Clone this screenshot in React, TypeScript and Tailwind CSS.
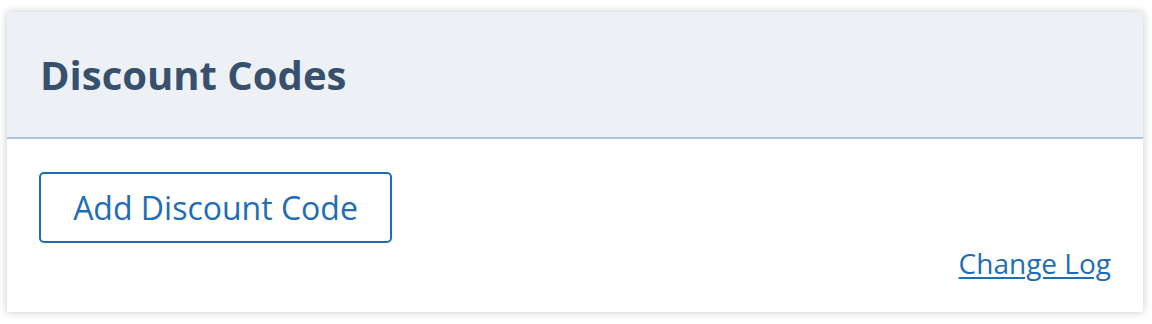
export default function App() {
  return (
    <div className="w-[1152px] h-[324px] bg-white pt-[12px] px-[7px]" style={{ fontFamily: '"Open Sans", sans-serif' }}>
      <div className="w-[1136px] h-[300px] bg-white shadow-[0_0_8px_rgba(0,0,0,0.22)] flex flex-col">
        <div className="h-[125px] bg-[#edf1f6] border-b-2 border-[#b0c3d7] box-content flex items-center pl-[33px]">
          <h1 className="text-[40px] font-bold text-[#36506e] leading-none">Discount Codes</h1>
        </div>
        <div className="flex-1 flex flex-col px-[32px] pt-[33px]">
          <div>
            <button className="h-[71px] w-[353px] border-2 border-[#1f6db4] rounded-[5px] text-[#1f6db4] text-[32px] leading-none">
              Add Discount Code
            </button>
          </div>
          <div className="flex justify-end mt-[-1px]">
            <a href="#" className="text-[#1f6db4] text-[28px] underline underline-offset-[3px] decoration-2">Change Log</a>
          </div>
        </div>
      </div>
    </div>
  );
}
